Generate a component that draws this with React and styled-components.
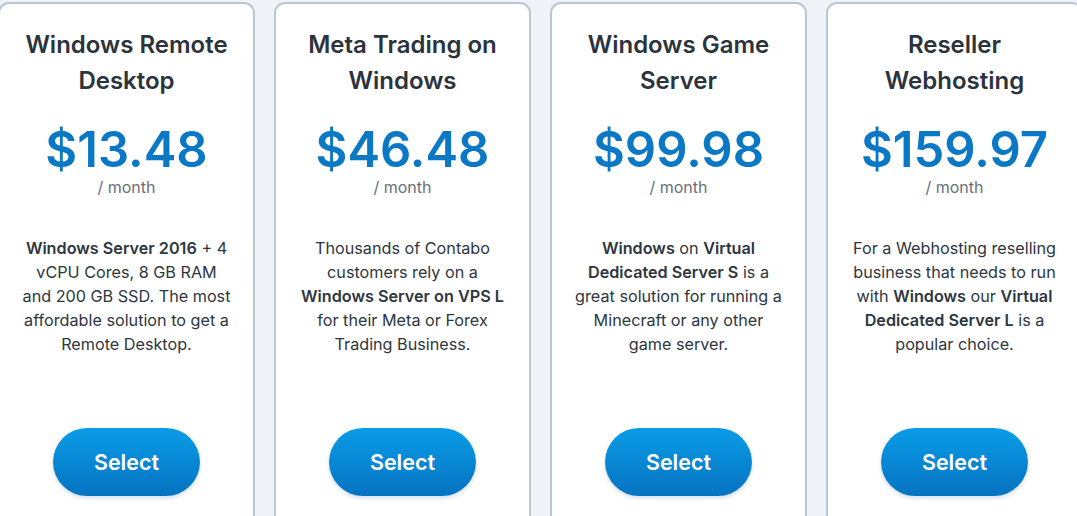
import React from 'react';
import styled, { createGlobalStyle } from 'styled-components';

const GlobalStyle = createGlobalStyle`
  body {
    margin: 0;
    background-color: #eff2f6;
    font-family: 'Inter', 'Liberation Sans', sans-serif;
    overflow: hidden;
  }
`;

const Row = styled.section`
  display: flex;
  gap: 19px;
  margin-left: -2px;
  padding-top: 2px;
`;

const Card = styled.article`
  flex: 0 0 257px;
  box-sizing: border-box;
  height: 540px;
  background-color: #ffffff;
  border: 2px solid #bac6d2;
  border-radius: 11px;
  padding: 23px 18px 0;
  display: flex;
  flex-direction: column;
  align-items: center;
  text-align: center;
`;

const Title = styled.h3`
  margin: 0;
  font-size: 24px;
  line-height: 36px;
  font-weight: 600;
  color: #2b333d;
`;

const Price = styled.div`
  margin-top: 24px;
  font-size: 49px;
  line-height: 54px;
  font-weight: 600;
  color: #0b78c6;
`;

const Period = styled.div`
  font-size: 16px;
  line-height: 20px;
  color: #6a7079;
`;

const Description = styled.p`
  margin: 39px 0 0;
  width: 208px;
  font-size: 16.2px;
  line-height: 24px;
  color: #2e3640;

  b {
    font-weight: 600;
  }
`;

const SelectButton = styled.button`
  margin-top: 72px;
  width: 147px;
  height: 68px;
  flex-shrink: 0;
  border: none;
  border-radius: 34px;
  background: linear-gradient(180deg, #0a9ce7 0%, #0673c1 100%);
  box-shadow: 0 2px 4px rgba(0, 60, 110, 0.18);
  color: #ffffff;
  font-family: inherit;
  font-size: 21.5px;
  font-weight: 600;
  cursor: pointer;
`;

const plans = [
  {
    title: 'Windows Remote Desktop',
    price: '$13.48',
    text: (
      <>
        <b>Windows Server 2016</b> + 4 vCPU Cores, 8 GB RAM and 200 GB SSD. The most
        affordable solution to get a Remote Desktop.
      </>
    ),
  },
  {
    title: 'Meta Trading on Windows',
    price: '$46.48',
    text: (
      <>
        Thousands of Contabo customers rely on a <b>Windows Server on VPS L</b> for their
        Meta or Forex Trading Business.
      </>
    ),
  },
  {
    title: 'Windows Game Server',
    price: '$99.98',
    text: (
      <>
        <b>Windows</b> on <b>Virtual Dedicated Server S</b> is a great solution for running a
        Minecraft or any other game server.
      </>
    ),
  },
  {
    title: 'Reseller Webhosting',
    price: '$159.97',
    text: (
      <>
        For a Webhosting reselling business that needs to run with <b>Windows</b> our{' '}
        <b>Virtual Dedicated Server L</b> is a popular choice.
      </>
    ),
  },
];

const App = () => {
  return (
    <>
      <GlobalStyle />
      <Row>
        {plans.map((plan) => (
          <Card key={plan.title}>
            <Title>{plan.title}</Title>
            <Price>{plan.price}</Price>
            <Period>/ month</Period>
            <Description>{plan.text}</Description>
            <SelectButton>Select</SelectButton>
          </Card>
        ))}
      </Row>
    </>
  );
};

export default App;
